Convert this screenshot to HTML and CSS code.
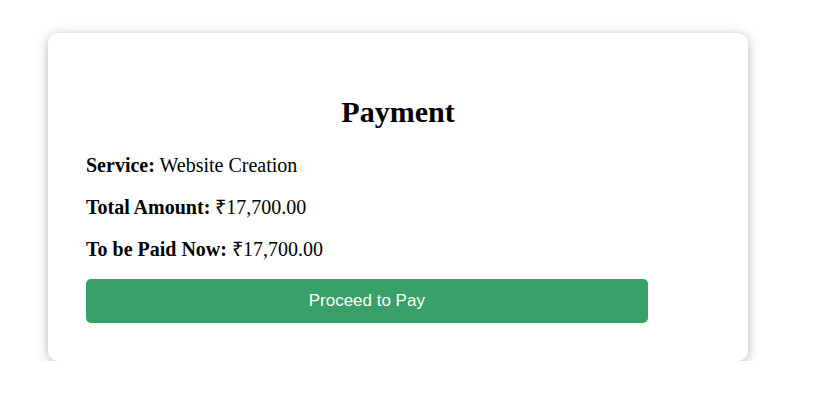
FILE: index.html
```html
<!DOCTYPE html>
<html lang="en">
<head>
<meta charset="utf-8">
<title>Payment</title>
<link rel="stylesheet" href="styles.css">
</head>
<body>
<div class="card">
  <h2 class="title">Payment</h2>
  <p class="row"><strong>Service:</strong> Website Creation</p>
  <p class="row"><strong>Total Amount:</strong> ₹17,700.00</p>
  <p class="row"><strong>To be Paid Now:</strong> ₹17,700.00</p>
  <button class="pay-btn" type="button">Proceed to Pay</button>
</div>
</body>
</html>
```
FILE: styles.css
```css
html, body {
  background: #ffffff;
}
body {
  margin: 0;
  padding: 33px 0 0 48px;
  font-family: "Liberation Serif", "Times New Roman", serif;
  color: #000;
}
.card {
  box-sizing: border-box;
  width: 700px;
  height: 328px;
  padding: 38px 38px 0;
  background: #fff;
  border-radius: 10px;
  box-shadow: 0 2px 12px rgba(0, 0, 0, 0.3);
}
.title {
  margin: 24px 0 25px;
  font-size: 30px;
  line-height: 34px;
  font-weight: bold;
  text-align: center;
}
.row {
  margin: 20px 0;
  font-size: 20px;
  line-height: 22px;
}
.row:last-of-type {
  margin-bottom: 19px;
}
.pay-btn {
  display: block;
  width: 90%;
  margin: 0;
  height: 44px;
  padding: 0;
  border: none;
  border-radius: 5px;
  background: #38a169;
  color: #fff;
  font-family: "Liberation Sans", Arial, sans-serif;
  font-size: 17px;
  cursor: pointer;
}
```
